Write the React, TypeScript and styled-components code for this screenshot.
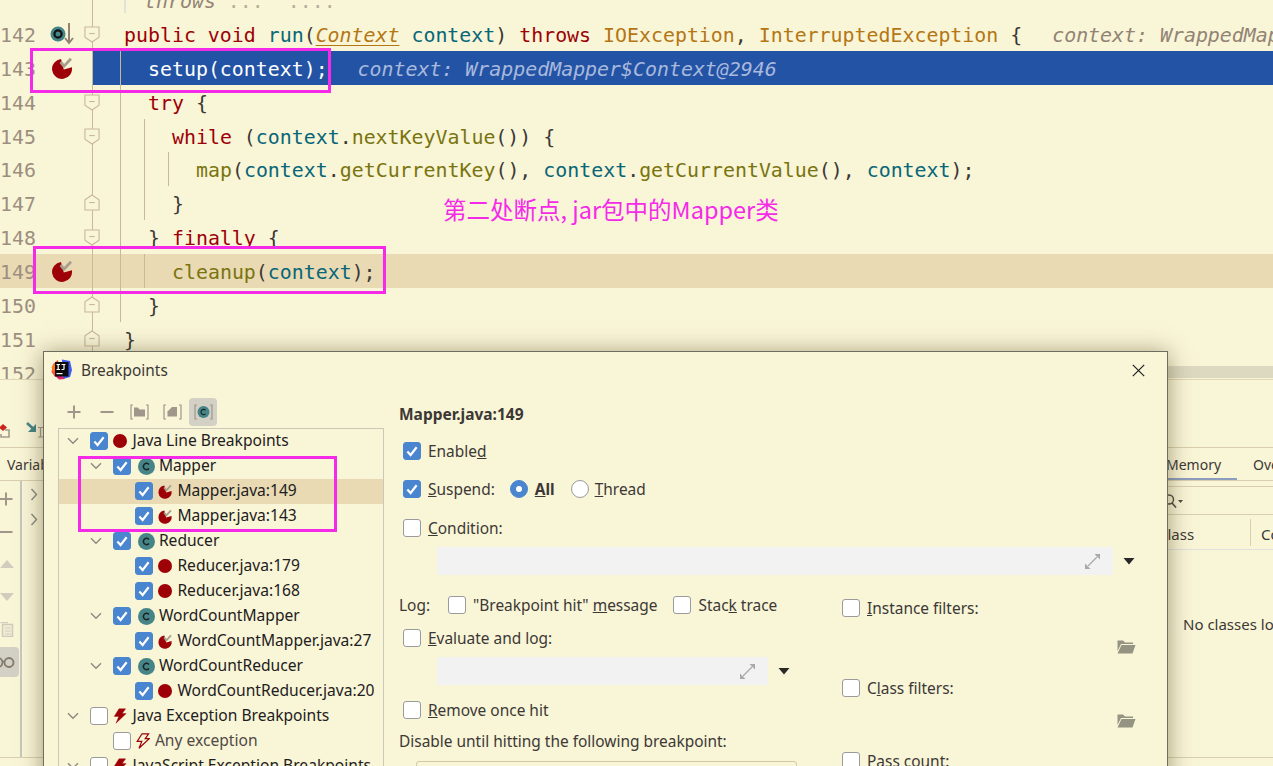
import React, { ReactNode } from 'react';
import styled, { createGlobalStyle } from 'styled-components';

const BG = '#f9f5d7';
const TEXT = '#3c3836';
const MAGENTA = '#f52ae8';
const GUTTER_LINE = '#c9b99a';
const ICON_GREY = '#a0968a';
const BLUE = '#4a86cf';
const UI_FONT = '"Noto Sans", "Open Sans", sans-serif';
const MONO_FONT = '"DejaVu Sans Mono", "Liberation Mono", monospace';
const ROW_H = 33.9;

const GlobalStyle = createGlobalStyle`
  html, body {
    margin: 0;
    height: 100%;
    overflow: hidden;
    background: ${BG};
  }
`;

const Page = styled.div`
  position: relative;
  width: 1273px;
  height: 766px;
  overflow: hidden;
  background: ${BG};
  font-family: ${UI_FONT};
  color: ${TEXT};
`;

/* editor */

const Editor = styled.div`
  position: relative;
  height: 379px;
  overflow: hidden;
  border-bottom: 1px solid #e0d6b5;
  box-sizing: content-box;
`;

const Lines = styled.div`
  margin-top: -17px;
`;

const Line = styled.div<{ $current?: boolean }>`
  display: flex;
  height: ${ROW_H}px;
  background: ${(p) => (p.$current ? '#e9dab3' : 'transparent')};
  font-family: ${MONO_FONT};
  font-size: 19.9px;
  white-space: pre;
`;

const LineNumber = styled.div`
  width: 38px;
  flex: none;
  box-sizing: border-box;
  padding-right: 2px;
  text-align: right;
  line-height: ${ROW_H + 3.5}px;
  color: #9c8f80;
`;

const BreakpointSlot = styled.div`
  width: 46px;
  flex: none;
  box-sizing: border-box;
  padding-left: 2px;
  display: flex;
  align-items: center;
  justify-content: center;
`;

const FoldSlot = styled.div<{ $selected?: boolean }>`
  width: 16px;
  flex: none;
  display: flex;
  align-items: center;
  justify-content: center;
  background:
    linear-gradient(${GUTTER_LINE}, ${GUTTER_LINE}) center / 1px 100% no-repeat,
    linear-gradient(90deg, transparent 50%, ${(p) => (p.$selected ? '#2353a5' : 'transparent')} 50%);
`;

const CodeCell = styled.div<{ $selected?: boolean }>`
  flex: 1;
  min-width: 0;
  overflow: hidden;
  display: flex;
  padding-left: 20px;
  line-height: ${ROW_H + 3.5}px;
  background: ${(p) => (p.$selected ? '#2353a5' : 'transparent')};
  color: ${(p) => (p.$selected ? '#ffffff' : TEXT)};
`;

const Guide = styled.span`
  width: 24px;
  box-sizing: border-box;
  border-left: 1px solid ${GUTTER_LINE};
  flex: none;
`;

const CodeText = styled.span`
  padding-left: 4px;
`;

const TOKEN_COLORS = {
  kw: '#9d0006',
  fn: '#79740e',
  field: '#076678',
  type: '#b57614',
  hint: '#928374',
  hintSelected: '#a9b9dc',
  fade: '#b7b09c',
};

const Tok = styled.span<{ $kind: keyof typeof TOKEN_COLORS }>`
  color: ${(p) => TOKEN_COLORS[p.$kind]};
  font-style: ${(p) => (p.$kind === 'hint' || p.$kind === 'hintSelected' ? 'italic' : 'normal')};
`;

const InlineHint = styled(Tok)`
  margin-left: 6px;
`;

const ContextType = styled.span`
  color: #b57614;
  font-style: italic;
  text-decoration: underline;
  text-underline-offset: 3px;
`;

const DocBar = styled.span`
  border-left: 2px solid #dfe3da;
  padding-left: 18px;
`;

const ScrollTrack = styled.div`
  position: absolute;
  left: 600px;
  right: 0;
  bottom: 1px;
  height: 12px;
  background: #dcd9c0;
`;

const Annotation = styled.div`
  position: absolute;
  left: 443px;
  top: 192px;
  color: ${MAGENTA};
  font-family: "Noto Sans CJK SC", sans-serif;
  font-size: 23.5px;
  line-height: 34px;
  white-space: pre;
`;

const Marker = styled.div<{ $x: number; $y: number; $w: number; $h: number }>`
  position: absolute;
  left: ${(p) => p.$x}px;
  top: ${(p) => p.$y}px;
  width: ${(p) => p.$w}px;
  height: ${(p) => p.$h}px;
  box-sizing: border-box;
  border: 3px solid ${MAGENTA};
  z-index: 5;
`;

/* debug panel behind the dialog */

const DebugToolbar = styled.div`
  height: 67px;
  box-sizing: border-box;
  display: flex;
  align-items: flex-end;
  padding-bottom: 9px;
  gap: 16px;
`;

const DebugTabs = styled.div`
  height: 34px;
  box-sizing: border-box;
  display: flex;
  justify-content: space-between;
  border-top: 1px solid #d9cfae;
  border-bottom: 1px solid #d9cfae;
  font-size: 14px;
`;

const Tab = styled.div<{ $active?: boolean }>`
  padding: 2px 16px 0;
  display: flex;
  align-items: center;
  box-sizing: border-box;
  height: 33px;
  white-space: nowrap;
  border-bottom: 3px solid ${(p) => (p.$active ? '#8d9dbd' : 'transparent')};
`;

const LeftTab = styled(Tab)`
  padding-left: 7px;
`;

const RightTabs = styled.div`
  width: 123px;
  display: flex;
  overflow: hidden;
`;

const DebugBody = styled.div`
  height: 276px;
  display: flex;
  justify-content: space-between;
  border-bottom: 1px solid #d9cfae;
`;

const Rail = styled.div`
  width: 22px;
  box-sizing: border-box;
  border-right: 2px solid #c8c8be;
  display: flex;
  flex-direction: column;
  padding-top: 3px;
`;

const RailButton = styled.div<{ $active?: boolean; $shift?: number }>`
  width: 19px;
  height: 30px;
  margin-bottom: 2.5px;
  display: flex;
  align-items: center;
  overflow: hidden;
  border-radius: 0 4px 4px 0;
  background: ${(p) => (p.$active ? '#d3d1c6' : 'transparent')};

  svg {
    flex: none;
    margin-left: ${(p) => p.$shift ?? 0}px;
  }
`;

const VarsList = styled.div`
  width: 20px;
  padding-top: 1px;
  padding-left: 8px;
  display: flex;
  flex-direction: column;
  margin-right: auto;
`;

const MemoryPanel = styled.div`
  width: 123px;
  overflow: hidden;
  white-space: nowrap;
`;

const MemorySearch = styled.div`
  height: 29px;
  margin-top: 5px;
  box-sizing: border-box;
  border-top: 1px solid #d9cfae;
  border-bottom: 1px solid #d9cfae;
  padding-left: 14px;
  display: flex;
  align-items: center;
`;

const MemoryHead = styled.div`
  height: 35px;
  box-sizing: border-box;
  display: flex;
  align-items: center;
  border-bottom: 1px solid #e0e0dc;
  font-size: 15px;
`;

const HeadCell = styled.div`
  width: 101px;
  height: 27px;
  box-sizing: border-box;
  padding: 3px 0 0 8px;
  border-right: 1px solid #d9cfae;
  display: flex;
  align-items: center;
  flex: none;
`;

const HeadRest = styled.div`
  padding: 3px 0 0 10px;
`;

const EmptyText = styled.div`
  margin: 63px 0 0 33px;
  font-size: 15px;
  line-height: 22px;
`;

/* dialog */

const Dialog = styled.div`
  position: absolute;
  left: 43px;
  top: 351px;
  width: 1125px;
  height: 500px;
  box-sizing: border-box;
  border: 1px solid #6f6d5f;
  background: ${BG};
  box-shadow: 0 2px 22px rgba(70, 60, 20, 0.5);
`;

const TitleBar = styled.div`
  height: 36px;
  display: flex;
  align-items: center;
  padding: 0 22px 0 7px;
  gap: 8px;
  font-size: 15.4px;
`;

const TitleText = styled.div`
  flex: 1;
`;

const DialogBody = styled.div`
  display: flex;
`;

const LeftPane = styled.div`
  width: 355px;
  flex: none;
  padding-left: 14px;
  box-sizing: border-box;
`;

const TreeToolbar = styled.div`
  height: 28px;
  margin: 10px 0 1.5px -1px;
  display: flex;
  align-items: center;
`;

const ToolButton = styled.div<{ $active?: boolean; $w: number }>`
  width: ${(p) => p.$w}px;
  height: 28px;
  display: flex;
  align-items: center;
  justify-content: center;
  border-radius: 4px;
  background: ${(p) => (p.$active ? '#d3d1c6' : 'transparent')};
`;

const Tree = styled.div`
  width: 326px;
  box-sizing: border-box;
  border: 1px solid #c9c8ba;
  height: 380px;
`;

const TreeRow = styled.div<{ $level: number; $selected?: boolean; $muted?: boolean }>`
  height: 25px;
  display: flex;
  align-items: center;
  padding-left: ${(p) => 6.4 + p.$level * 22.5}px;
  font-size: 15.6px;
  white-space: nowrap;
  color: ${(p) => (p.$muted ? '#504945' : '#1d2021')};
  background: ${(p) => (p.$selected ? '#e9dab3' : 'transparent')};
`;

const TreeLabel = styled.span`
  margin-top: -3px;
`;

const Chevron = styled.div`
  width: 25px;
  height: 16px;
  flex: none;
  box-sizing: border-box;
  padding-right: 9px;
  display: flex;
  align-items: center;
  justify-content: center;
`;

const TreeIcon = styled.div<{ $wide?: boolean }>`
  width: ${(p) => (p.$wide ? 17 : 16)}px;
  flex: none;
  margin-left: ${(p) => (p.$wide ? 7 : 4)}px;
  margin-right: 4px;
  display: flex;
  align-items: center;
  justify-content: center;
`;

const Box = styled.span<{ $on?: boolean }>`
  width: 18px;
  height: 18px;
  flex: none;
  box-sizing: border-box;
  border-radius: 3px;
  display: inline-flex;
  align-items: center;
  justify-content: center;
  background: ${(p) => (p.$on ? BLUE : '#ffffff')};
  border: 1px solid ${(p) => (p.$on ? BLUE : '#9b9b9b')};
`;

const Radio = styled.span<{ $on?: boolean }>`
  width: 18px;
  height: 18px;
  flex: none;
  box-sizing: border-box;
  border-radius: 50%;
  display: inline-flex;
  align-items: center;
  justify-content: center;
  background: ${(p) => (p.$on ? BLUE : '#ffffff')};
  border: 1px solid ${(p) => (p.$on ? BLUE : '#9b9b9b')};

  &::after {
    content: '';
    display: ${(p) => (p.$on ? 'block' : 'none')};
    width: 6px;
    height: 6px;
    border-radius: 50%;
    background: #ffffff;
  }
`;

const RightPane = styled.div`
  flex: 1;
  font-size: 15.45px;
  min-width: 0;
`;

const BreakpointTitle = styled.div`
  margin-top: 16px;
  height: 20px;
  line-height: 20px;
  font-weight: 700;
  font-size: 15.5px;
`;

const FormRow = styled.div<{ $top: number; $indent?: number }>`
  height: 24px;
  margin-top: ${(p) => p.$top}px;
  margin-left: ${(p) => p.$indent ?? 0}px;
  display: flex;
  align-items: center;
  white-space: nowrap;
  line-height: 24px;
`;

const Label = styled.span<{ $gap?: number; $bold?: boolean }>`
  margin-left: ${(p) => p.$gap ?? 7}px;
  font-weight: ${(p) => (p.$bold ? 700 : 400)};
`;

const Spacer = styled.span<{ $w: number }>`
  width: ${(p) => p.$w}px;
  flex: none;
`;

const LogLabel = styled.span`
  width: 49px;
`;

const ExprRow = styled.div<{ $top: number }>`
  display: flex;
  align-items: center;
  margin-top: ${(p) => p.$top}px;
  margin-left: 38px;
`;

const ExprField = styled.div<{ $w: number }>`
  width: ${(p) => p.$w}px;
  height: 28px;
  background: #f2f2f2;
  display: flex;
  align-items: center;
  justify-content: flex-end;
  padding-right: 12px;
  box-sizing: border-box;
`;

const ExprArrow = styled.div`
  margin-left: 10px;
  width: 12px;
  height: 8px;
  display: flex;
`;

const Columns = styled.div`
  display: grid;
  grid-template-columns: 443px 294px;
`;

const SelectBox = styled.div`
  width: 381px;
  height: 30px;
  margin: 8px 0 0 17px;
  box-sizing: border-box;
  border: 1px solid #d5c9a3;
  border-radius: 3px;
`;

const FolderRow = styled.div<{ $top: number }>`
  height: 22px;
  margin-top: ${(p) => p.$top}px;
  display: flex;
  align-items: center;
  justify-content: flex-end;
`;

/* icons */

const BreakpointIcon = ({ size }: { size: number }) => (
  <svg width={size} height={size} viewBox="0 0 24 24">
    <path d="M11 3A10 10 0 1 0 21.9 11.2L13.8 13.5Z" fill="#9d0006" />
    <path d="M10.6 6L14 10.2 21 2.8" fill="none" stroke="#a89e8e" strokeWidth="2.8" />
  </svg>
);

const Dot = ({ size }: { size: number }) => (
  <svg width={size} height={size} viewBox="0 0 14 14">
    <circle cx="7" cy="7" r="7" fill="#9d0006" />
  </svg>
);

const HitIcon = () => (
  <svg width="38" height="24" viewBox="0 0 38 24">
    <circle cx="15" cy="12" r="7.5" fill="#458588" />
    <circle cx="15" cy="12" r="3.6" fill="none" stroke="#111" strokeWidth="2.2" />
    <path d="M26 1v19M22 16l4 5 4-5" fill="none" stroke="#928374" strokeWidth="2" />
  </svg>
);

const FoldMark = ({ up }: { up?: boolean }) => (
  <svg width="17" height="24" viewBox="0 0 17 24">
    <g transform={up ? 'rotate(180 8.5 12)' : undefined}>
      <path d="M1 4.5H16V15.5L8.5 20.5 1 15.5Z" fill={BG} stroke={GUTTER_LINE} strokeWidth="1.2" />
    </g>
    <path d="M5.5 11.5H11.5" stroke={GUTTER_LINE} strokeWidth="1.2" />
  </svg>
);

const Check = () => (
  <svg width="14" height="14" viewBox="0 0 13 13">
    <path d="M2.2 7l3 3.2L10.8 3" fill="none" stroke="#fff" strokeWidth="2" />
  </svg>
);

const ChevronDown = () => (
  <svg width="12" height="8" viewBox="0 0 12 8">
    <path d="M1 1.2l5 5 5-5" fill="none" stroke="#8a8a80" strokeWidth="1.4" />
  </svg>
);

const ChevronRight = () => (
  <svg width="8" height="25" viewBox="0 0 8 25">
    <path d="M1.5 7l5 5.5-5 5.5" fill="none" stroke="#8a8a80" strokeWidth="1.4" />
  </svg>
);

const ClassIcon = () => (
  <svg width="17" height="17" viewBox="0 0 17 17">
    <circle cx="8.5" cy="8.5" r="8.5" fill="#458588" />
    <path d="M11 6.4A3.2 3.2 0 1 0 11 10.6" fill="none" stroke="#1d2021" strokeWidth="1.5" />
  </svg>
);

const Bolt = ({ outline }: { outline?: boolean }) => (
  <svg width="14" height="16" viewBox="0 0 14 16">
    <path
      d="M6 0.8H12.6L9.2 5.6H13.2L3 15.2 5.8 8.4H1.2Z"
      fill={outline ? 'none' : '#9d0006'}
      stroke="#9d0006"
      strokeWidth={outline ? 1.2 : 0.4}
    />
  </svg>
);

const ExpandIcon = () => (
  <svg width="17" height="17" viewBox="0 0 17 17">
    <path d="M10.5 1H16V6.5ZM1 10.5V16H6.5Z" fill="#a9a9a9" />
    <path d="M13 4L4 13" stroke="#a9a9a9" strokeWidth="1.2" />
  </svg>
);

const ArrowDown = () => (
  <svg width="12" height="8" viewBox="0 0 12 8">
    <path d="M0.5 1H11.5L6 7.5Z" fill="#282828" />
  </svg>
);

const FolderOpen = () => (
  <svg width="19" height="14" viewBox="0 0 19 14">
    <path d="M0.5 0.5H6L8 2.5H16V4H4L0.5 11Z" fill="#959482" />
    <path d="M4.5 5H18.5L15.5 13.5H0.5Z" fill="#959482" />
  </svg>
);

const CloseIcon = () => (
  <svg width="13" height="13" viewBox="0 0 13 13">
    <path d="M0.8 0.8L12.2 12.2M12.2 0.8L0.8 12.2" stroke="#1d2021" strokeWidth="1.2" />
  </svg>
);

const IdeaLogo = () => (
  <svg width="22" height="22" viewBox="0 0 22 22">
    <path d="M2 5L7 1 9 12 4 18 0.5 13Z" fill="#fc4f3e" />
    <path d="M0.5 8L4 4 5 10 2 13Z" fill="#fe7a16" />
    <path d="M11 0.5L19 2 21 11 19 18 12 20Z" fill="#3f5bf0" />
    <path d="M3 16L8 20.5 14 20 8 14Z" fill="#e3206f" />
    <rect x="4" y="3" width="13.5" height="14.5" fill="#0b0b0b" />
    <path d="M5.5 5.5H9M7.2 5.5V10.5M5.5 10.5H9M10.5 5.5H14.5M13 5.5V9.8Q13 10.5 12.2 10.5H10.5" fill="none" stroke="#fff" strokeWidth="1.2" />
    <rect x="5.5" y="14" width="6" height="1.2" fill="#fff" />
  </svg>
);

const PlusIcon = () => (
  <svg width="14" height="14" viewBox="0 0 14 14">
    <path d="M7 0.5V13.5M0.5 7H13.5" stroke={ICON_GREY} strokeWidth="2" />
  </svg>
);

const MinusIcon = () => (
  <svg width="14" height="14" viewBox="0 0 14 14">
    <path d="M0.5 7H13.5" stroke={ICON_GREY} strokeWidth="2" />
  </svg>
);

const Brackets = ({ children }: { children: ReactNode }) => (
  <svg width="19" height="16" viewBox="0 0 19 16">
    <path d="M3 1H1V15H3M16 1H18V15H16" fill="none" stroke={ICON_GREY} strokeWidth="1.2" />
    {children}
  </svg>
);

const TriangleUp = () => (
  <svg width="14" height="8" viewBox="0 0 14 8">
    <path d="M7 0L14 8H0Z" fill="#d0cdbf" />
  </svg>
);

const TriangleDown = () => (
  <svg width="14" height="8" viewBox="0 0 14 8">
    <path d="M0 0H14L7 8Z" fill="#d0cdbf" />
  </svg>
);

const CopyIcon = () => (
  <svg width="14" height="15" viewBox="0 0 14 15">
    <path d="M0.5 0.5H8" fill="none" stroke="#d0cdbf" strokeWidth="1.5" />
    <rect x="2.5" y="2.5" width="10" height="12" fill="#f0edd0" stroke="#cfccbe" strokeWidth="1.5" />
    <path d="M5 6H10.5M5 9H10.5M5 12H10.5" stroke="#cfccbe" strokeWidth="1.2" />
  </svg>
);

const GlassesIcon = () => (
  <svg width="24" height="12" viewBox="0 0 24 12">
    <circle cx="7" cy="6.5" r="4.5" fill="none" stroke="#847a6c" strokeWidth="1.8" />
    <circle cx="18" cy="6.5" r="4.5" fill="none" stroke="#847a6c" strokeWidth="1.8" />
    <path d="M11 5.5H14" stroke="#847a6c" strokeWidth="1.6" />
  </svg>
);

const StepIcons = () => (
  <>
    <svg width="10" height="16" viewBox="0 0 10 16">
      <path d="M3 2L7 5.5 3 9 -1 5.5Z" fill="#cc241d" />
      <path d="M5 8H9V15H1V12" fill="none" stroke="#a39c8e" strokeWidth="1.6" />
    </svg>
    <svg width="18" height="16" viewBox="0 0 18 16">
      <path d="M1 1L7 6.5" stroke="#458588" strokeWidth="2.6" />
      <path d="M10 2V10H2Z" fill="#458588" />
      <path d="M12 5.5H17M14.5 5.5V15M12 15H17" stroke="#a39c8e" strokeWidth="1.2" fill="none" />
    </svg>
  </>
);

const SearchIcon = () => (
  <svg width="22" height="14" viewBox="0 0 22 14">
    <circle cx="5" cy="5.5" r="4.5" fill="none" stroke="#504945" strokeWidth="1.4" />
    <path d="M8 9L12 13.5" stroke="#504945" strokeWidth="1.6" />
    <path d="M14 6H19L16.5 9Z" fill="#504945" />
  </svg>
);

/* data */

type FoldKind = 'down' | 'up' | null;

interface CodeLine {
  no: number;
  level: number;
  fold: FoldKind;
  code: ReactNode;
}

const CODE_LINES: CodeLine[] = [
  { no: 145, level: 2, fold: 'down', code: <><Tok $kind="kw">while</Tok> (<Tok $kind="field">context</Tok>.<Tok $kind="fn">nextKeyValue</Tok>()) {'{'}</> },
  { no: 146, level: 3, fold: null, code: <><Tok $kind="fn">map</Tok>(<Tok $kind="field">context</Tok>.<Tok $kind="fn">getCurrentKey</Tok>(), <Tok $kind="field">context</Tok>.<Tok $kind="fn">getCurrentValue</Tok>(), <Tok $kind="field">context</Tok>);</> },
  { no: 147, level: 2, fold: 'up', code: '}' },
  { no: 148, level: 1, fold: 'down', code: <>{'} '}<Tok $kind="kw">finally</Tok> {'{'}</> },
];

interface TreeItem {
  level: number;
  label: string;
  chevron?: boolean;
  checked: boolean;
  icon: ReactNode;
  wide?: boolean;
  selected?: boolean;
  muted?: boolean;
}

const TREE: TreeItem[] = [
  { level: 0, label: 'Java Line Breakpoints', chevron: true, checked: true, icon: <Dot size={14} /> },
  { level: 1, label: 'Mapper', chevron: true, checked: true, icon: <ClassIcon />, wide: true },
  { level: 2, label: 'Mapper.java:149', checked: true, icon: <BreakpointIcon size={17} />, selected: true },
  { level: 2, label: 'Mapper.java:143', checked: true, icon: <BreakpointIcon size={17} /> },
  { level: 1, label: 'Reducer', chevron: true, checked: true, icon: <ClassIcon />, wide: true },
  { level: 2, label: 'Reducer.java:179', checked: true, icon: <Dot size={14} /> },
  { level: 2, label: 'Reducer.java:168', checked: true, icon: <Dot size={14} /> },
  { level: 1, label: 'WordCountMapper', chevron: true, checked: true, icon: <ClassIcon />, wide: true },
  { level: 2, label: 'WordCountMapper.java:27', checked: true, icon: <BreakpointIcon size={17} /> },
  { level: 1, label: 'WordCountReducer', chevron: true, checked: true, icon: <ClassIcon />, wide: true },
  { level: 2, label: 'WordCountReducer.java:20', checked: true, icon: <Dot size={14} /> },
  { level: 0, label: 'Java Exception Breakpoints', chevron: true, checked: false, icon: <Bolt /> },
  { level: 1, label: 'Any exception', checked: false, icon: <Bolt outline />, muted: true },
  { level: 0, label: 'JavaScript Exception Breakpoints', chevron: true, checked: false, icon: <Bolt /> },
];

const Check17 = ({ on }: { on?: boolean }) => <Box $on={on}>{on && <Check />}</Box>;

const Guides = ({ count }: { count: number }) => (
  <>
    {Array.from({ length: count }, (_, i) => (
      <Guide key={i} />
    ))}
  </>
);

const CodeRow = ({ no, level, fold, code }: CodeLine) => (
  <Line>
    <LineNumber>{no}</LineNumber>
    <BreakpointSlot />
    <FoldSlot>{fold && <FoldMark up={fold === 'up'} />}</FoldSlot>
    <CodeCell>
      <Guides count={level} />
      <CodeText>{code}</CodeText>
    </CodeCell>
  </Line>
);

const TreeNode = ({ level, label, chevron, checked, icon, wide, selected, muted }: TreeItem) => (
  <TreeRow $level={level} $selected={selected} $muted={muted}>
    <Chevron>{chevron && <ChevronDown />}</Chevron>
    <Check17 on={checked} />
    <TreeIcon $wide={wide}>{icon}</TreeIcon>
    <TreeLabel>{label}</TreeLabel>
  </TreeRow>
);

const App = () => (
  <Page>
    <GlobalStyle />
    <Editor>
      <Lines>
        <Line>
          <LineNumber />
          <BreakpointSlot />
          <FoldSlot />
          <CodeCell>
            <CodeText>
              <DocBar>
                <Tok $kind="hint">throws</Tok> <Tok $kind="fade">...  ....</Tok>
              </DocBar>
            </CodeText>
          </CodeCell>
        </Line>
        <Line>
          <LineNumber>142</LineNumber>
          <BreakpointSlot>
            <HitIcon />
          </BreakpointSlot>
          <FoldSlot>
            <FoldMark />
          </FoldSlot>
          <CodeCell>
            <CodeText>
              <Tok $kind="kw">public void </Tok>
              <Tok $kind="field">run</Tok>(<ContextType>Context</ContextType> <Tok $kind="field">context</Tok>) <Tok $kind="kw">throws</Tok>{' '}
              <Tok $kind="type">IOException</Tok>, <Tok $kind="type">InterruptedException</Tok> {'{'}
              {'  '}
              <InlineHint $kind="hint">context: WrappedMapper$Context@2946</InlineHint>
            </CodeText>
          </CodeCell>
        </Line>
        <Line>
          <LineNumber>143</LineNumber>
          <BreakpointSlot>
            <BreakpointIcon size={24} />
          </BreakpointSlot>
          <FoldSlot $selected />
          <CodeCell $selected>
            <Guides count={1} />
            <CodeText>
              setup(context);{'  '}
              <InlineHint $kind="hintSelected">context: WrappedMapper$Context@2946</InlineHint>
            </CodeText>
          </CodeCell>
        </Line>
        <Line>
          <LineNumber>144</LineNumber>
          <BreakpointSlot />
          <FoldSlot>
            <FoldMark />
          </FoldSlot>
          <CodeCell>
            <Guides count={1} />
            <CodeText>
              <Tok $kind="kw">try</Tok> {'{'}
            </CodeText>
          </CodeCell>
        </Line>
        {CODE_LINES.map((line) => (
          <CodeRow key={line.no} {...line} />
        ))}
        <Line $current>
          <LineNumber>149</LineNumber>
          <BreakpointSlot>
            <BreakpointIcon size={24} />
          </BreakpointSlot>
          <FoldSlot />
          <CodeCell>
            <Guides count={2} />
            <CodeText>
              <Tok $kind="fn">cleanup</Tok>(<Tok $kind="field">context</Tok>);
            </CodeText>
          </CodeCell>
        </Line>
        <CodeRow no={150} level={1} fold="up" code="}" />
        <CodeRow no={151} level={0} fold="up" code="}" />
        <CodeRow no={152} level={0} fold={null} code="" />
      </Lines>
      <ScrollTrack />
      <Annotation>第二处断点, jar包中的Mapper类</Annotation>
    </Editor>

    <DebugToolbar>
      <StepIcons />
    </DebugToolbar>
    <DebugTabs>
      <LeftTab>Variables</LeftTab>
      <RightTabs>
        <Tab $active>Memory</Tab>
        <Tab>Overhead</Tab>
      </RightTabs>
    </DebugTabs>
    <DebugBody>
      <Rail>
        <RailButton $shift={-1}>
          <PlusIcon />
        </RailButton>
        <RailButton $shift={-1}>
          <MinusIcon />
        </RailButton>
        <RailButton>
          <TriangleUp />
        </RailButton>
        <RailButton>
          <TriangleDown />
        </RailButton>
        <RailButton>
          <CopyIcon />
        </RailButton>
        <RailButton $active $shift={-9}>
          <GlassesIcon />
        </RailButton>
      </Rail>
      <VarsList>
        <ChevronRight />
        <ChevronRight />
      </VarsList>
      <MemoryPanel>
        <MemorySearch>
          <SearchIcon />
        </MemorySearch>
        <MemoryHead>
          <HeadCell>Class</HeadCell>
          <HeadRest>Count</HeadRest>
        </MemoryHead>
        <EmptyText>No classes loaded</EmptyText>
      </MemoryPanel>
    </DebugBody>

    <Dialog>
      <TitleBar>
        <IdeaLogo />
        <TitleText>Breakpoints</TitleText>
        <CloseIcon />
      </TitleBar>
      <DialogBody>
        <LeftPane>
          <TreeToolbar>
            <ToolButton $w={33}>
              <PlusIcon />
            </ToolButton>
            <ToolButton $w={33}>
              <MinusIcon />
            </ToolButton>
            <ToolButton $w={33}>
              <Brackets>
                <path d="M4 3.5H8L9.5 5.5H15V12.5H4Z" fill={ICON_GREY} />
              </Brackets>
            </ToolButton>
            <ToolButton $w={33}>
              <Brackets>
                <path d="M9 3H14V12.5H4.5V7.5Z" fill={ICON_GREY} />
              </Brackets>
            </ToolButton>
            <ToolButton $w={28} $active>
              <Brackets>
                <circle cx="9.5" cy="8" r="6" fill="#458588" />
                <path d="M11.5 6.2A2.6 2.6 0 1 0 11.5 9.8" fill="none" stroke="#1d2021" strokeWidth="1.1" />
              </Brackets>
            </ToolButton>
          </TreeToolbar>
          <Tree>
            {TREE.map((item) => (
              <TreeNode key={item.label} {...item} />
            ))}
          </Tree>
        </LeftPane>
        <RightPane>
          <BreakpointTitle>Mapper.java:149</BreakpointTitle>
          <FormRow $top={15} $indent={4}>
            <Check17 on />
            <Label>
              Enable<u>d</u>
            </Label>
          </FormRow>
          <FormRow $top={14} $indent={4}>
            <Check17 on />
            <Label>
              <u>S</u>uspend:
            </Label>
            <Spacer $w={15} />
            <Radio $on />
            <Label $bold>
              <u>A</u>ll
            </Label>
            <Spacer $w={16} />
            <Radio />
            <Label $gap={6}>
              <u>T</u>hread
            </Label>
          </FormRow>
          <FormRow $top={15} $indent={4}>
            <Check17 />
            <Label>
              <u>C</u>ondition:
            </Label>
          </FormRow>
          <ExprRow $top={7}>
            <ExprField $w={676}>
              <ExpandIcon />
            </ExprField>
            <ExprArrow>
              <ArrowDown />
            </ExprArrow>
          </ExprRow>
          <Columns>
            <div>
              <FormRow $top={18}>
                <LogLabel>Log:</LogLabel>
                <Check17 />
                <Label>
                  "Breakpoint hit" <u>m</u>essage
                </Label>
                <Spacer $w={16} />
                <Check17 />
                <Label>
                  Stac<u>k</u> trace
                </Label>
              </FormRow>
              <FormRow $top={9} $indent={4}>
                <Check17 />
                <Label>
                  <u>E</u>valuate and log:
                </Label>
              </FormRow>
              <ExprRow $top={7}>
                <ExprField $w={331}>
                  <ExpandIcon />
                </ExprField>
                <ExprArrow>
                  <ArrowDown />
                </ExprArrow>
              </ExprRow>
              <FormRow $top={13} $indent={4}>
                <Check17 />
                <Label>
                  <u>R</u>emove once hit
                </Label>
              </FormRow>
              <FormRow $top={7}>Disable until hitting the following breakpoint:</FormRow>
              <SelectBox />
            </div>
            <div>
              <FormRow $top={21}>
                <Check17 />
                <Label>
                  <u>I</u>nstance filters:
                </Label>
              </FormRow>
              <FolderRow $top={16}>
                <FolderOpen />
              </FolderRow>
              <FormRow $top={18}>
                <Check17 />
                <Label>
                  C<u>l</u>ass filters:
                </Label>
              </FormRow>
              <FolderRow $top={10}>
                <FolderOpen />
              </FolderRow>
              <FormRow $top={17}>
                <Check17 />
                <Label>
                  <u>P</u>ass count:
                </Label>
              </FormRow>
            </div>
          </Columns>
        </RightPane>
      </DialogBody>
    </Dialog>

    <Marker $x={30} $y={48} $w={301} $h={45} />
    <Marker $x={33} $y={246} $w={353} $h={48} />
    <Marker $x={78} $y={456} $w={259} $h={76} />
  </Page>
);

export default App;
